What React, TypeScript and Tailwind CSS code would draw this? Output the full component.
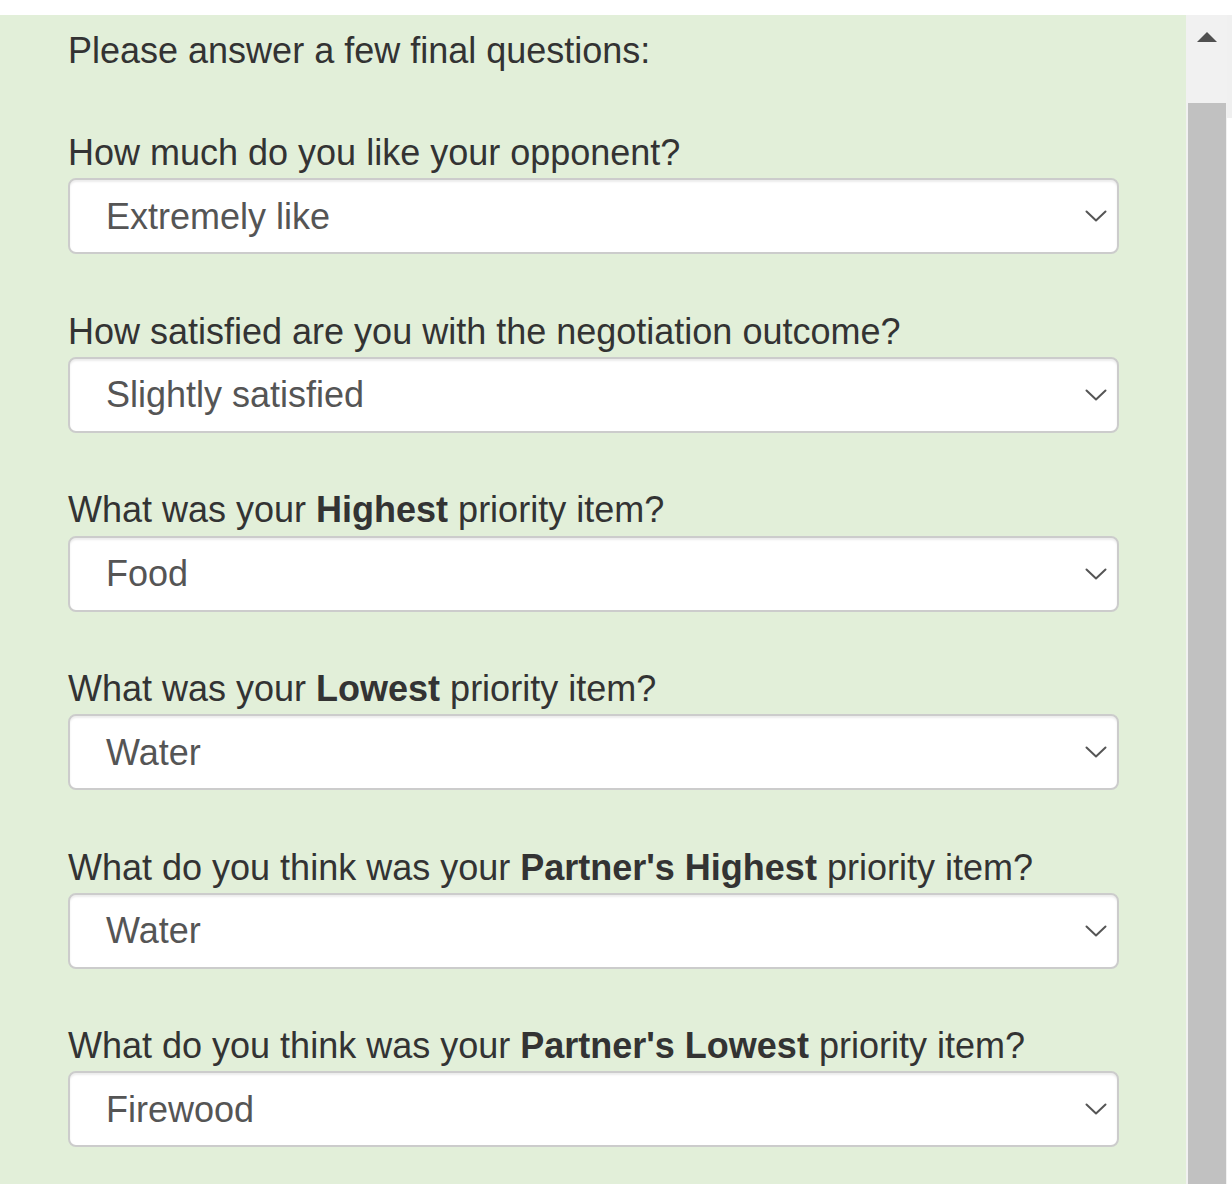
import React from 'react';

type Question = {
  label: React.ReactNode;
  value: string;
};

const questions: Question[] = [
  { label: 'How much do you like your opponent?', value: 'Extremely like' },
  { label: 'How satisfied are you with the negotiation outcome?', value: 'Slightly satisfied' },
  {
    label: (
      <>
        What was your <b className="font-bold">Highest</b> priority item?
      </>
    ),
    value: 'Food',
  },
  {
    label: (
      <>
        What was your <b className="font-bold">Lowest</b> priority item?
      </>
    ),
    value: 'Water',
  },
  {
    label: (
      <>
        What do you think was your <b className="font-bold">Partner's Highest</b> priority item?
      </>
    ),
    value: 'Water',
  },
  {
    label: (
      <>
        What do you think was your <b className="font-bold">Partner's Lowest</b> priority item?
      </>
    ),
    value: 'Firewood',
  },
];

function Chevron() {
  return (
    <svg width="22" height="12" viewBox="0 0 22 12" fill="none" className="shrink-0">
      <path d="M1.5 1.5 L11 10.5 L20.5 1.5" stroke="#555" strokeWidth="2" strokeLinecap="round" strokeLinejoin="round" />
    </svg>
  );
}

function SelectBox({ value }: { value: string }) {
  return (
    <div className="flex h-[76px] w-[1051px] items-center justify-between rounded-[8px] border-2 border-[#cccccc] bg-white pl-[36px] pr-[10px] text-[#555555] shadow-[inset_0_2px_2px_rgba(0,0,0,0.075)]">
      <span className="leading-[1.2]">{value}</span>
      <Chevron />
    </div>
  );
}

export default function App() {
  return (
    <div
      className="flex h-[1184px] w-[1232px] flex-col overflow-hidden bg-white text-[36px] text-[#333333]"
      style={{ fontFamily: '"Liberation Sans", Arial, sans-serif' }}
    >
      <div className="h-[15px] shrink-0 bg-white" />
      <div className="flex min-h-0 flex-1">
        {/* form panel */}
        <div className="flex-1 bg-[#e2efd9] pl-[68px] pt-[14px]">
          <p className="leading-[1.2]">Please answer a few final questions:</p>
          <div className="mt-[59px] flex flex-col">
            {questions.map((q, i) => (
              <div key={i} className="mb-[55.4px] flex flex-col">
                <label className="mb-[4px] leading-[1.2]">{q.label}</label>
                <SelectBox value={q.value} />
              </div>
            ))}
          </div>
        </div>

        {/* scrollbar */}
        <div className="flex w-[41px] shrink-0 flex-col bg-[#f1f1f1]">
          <div className="flex h-[88px] shrink-0 justify-center pt-[17px]">
            <svg width="20" height="10" viewBox="0 0 20 10">
              <path d="M10 0 L20 10 L0 10 Z" fill="#505050" />
            </svg>
          </div>
          <div className="ml-[2px] mr-[1px] flex-1 bg-[#c1c1c1]" />
        </div>
        <div className="flex w-[5px] shrink-0 flex-col">
          <div className="h-[103px] bg-[#f0f0f0]" />
          <div className="flex-1 bg-white" />
        </div>
      </div>
    </div>
  );
}
